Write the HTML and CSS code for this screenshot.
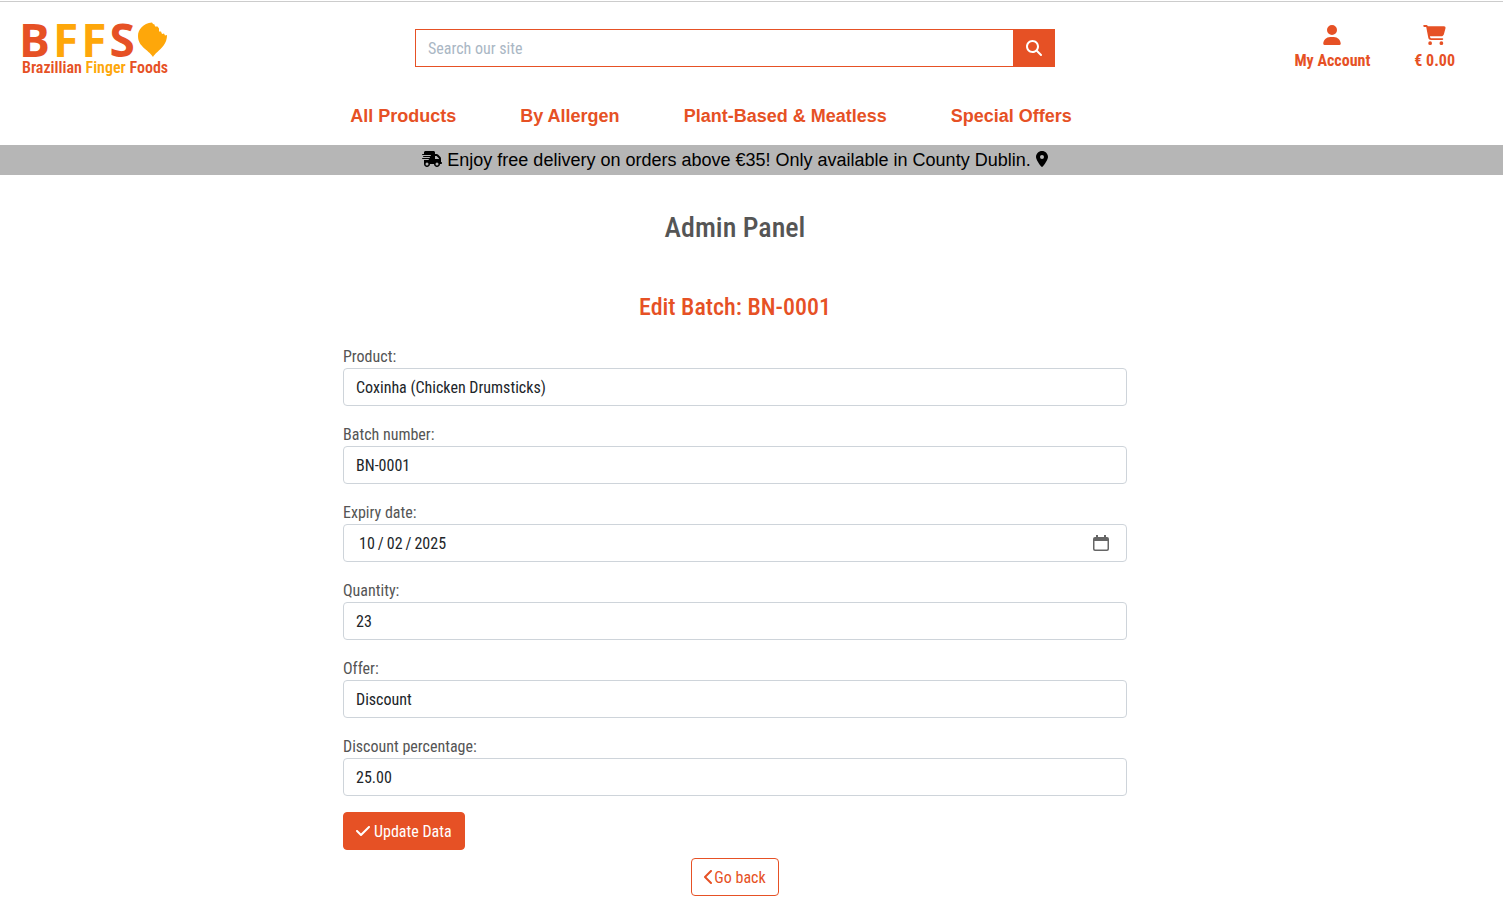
FILE: index.html
```html
<!DOCTYPE html>
<html lang="en">
<head>
<meta charset="utf-8">
<meta name="viewport" content="width=device-width, initial-scale=1">
<title>Admin Panel - Brazillian Finger Foods</title>
<link rel="stylesheet" href="styles.css">
</head>
<body>
<header class="site-header">
  <div class="header-top">
    <a href="#" class="logo" aria-label="Brazillian Finger Foods home">
      <span class="logo-letters">
        <span>B</span><span class="gold">F</span><span class="gold">F</span><span>S</span>
        <svg class="logo-mark" viewBox="0 0 29 35" aria-hidden="true"><path d="M14 0.500 C5 1.500 0 7.500 0 14 C0 25 10 27 15 35 C19 28.500 29 25 29 13 L27 13.500 L26 11.500 L24 12 L23 9.500 L21 9.500 L21 6.500 L19.500 4.500 L17 4.500 L16.500 2.500 L15 2 Z" fill="#fea70a"/></svg>
      </span>
      <span class="logo-tagline">Brazillian <span class="gold">Finger</span> Foods</span>
    </a>
    <form class="search" role="search">
      <input type="search" class="search-input" placeholder="Search our site" aria-label="Search our site">
      <button type="button" class="search-button" aria-label="Search">
        <svg class="icon-16" viewBox="0 0 512 512" aria-hidden="true"><path d="M416 208c0 45.900-14.900 88.300-40 122.700L502.600 457.400c12.500 12.500 12.500 32.800 0 45.300s-32.800 12.500-45.300 0L330.700 376c-34.400 25.200-76.800 40-122.700 40C93.100 416 0 322.900 0 208S93.100 0 208 0S416 93.100 416 208zM208 352a144 144 0 1 0 0-288 144 144 0 1 0 0 288z"/></svg>
      </button>
    </form>
    <div class="account-links">
      <a href="#" class="account-link">
        <svg class="icon-user" viewBox="0 0 448 512" aria-hidden="true"><path d="M224 256A128 128 0 1 0 224 0a128 128 0 1 0 0 256zm-45.700 48C79.800 304 0 383.800 0 482.300C0 498.700 13.300 512 29.700 512H418.300c16.400 0 29.700-13.300 29.700-29.700C448 383.800 368.200 304 269.700 304H178.300z"/></svg>
        <span>My Account</span>
      </a>
      <a href="#" class="account-link">
        <svg class="icon-cart" viewBox="0 0 576 512" aria-hidden="true"><path d="M0 24C0 10.700 10.700 0 24 0H69.500c22 0 41.500 12.800 50.600 32h411c26.300 0 45.500 25 38.600 50.400l-41 152.300c-8.500 31.400-37 53.300-69.500 53.300H170.700l5.400 28.500c2.200 11.300 12.100 19.500 23.600 19.500H488c13.300 0 24 10.700 24 24s-10.700 24-24 24H199.700c-34.600 0-64.300-24.600-70.700-58.500L77.400 54.500c-.7-3.800-4-6.500-7.900-6.500H24C10.700 48 0 37.300 0 24zM128 464a48 48 0 1 1 96 0 48 48 0 1 1 -96 0zm336-48a48 48 0 1 1 0 96 48 48 0 1 1 0-96z"/></svg>
        <span>€ 0.00</span>
      </a>
    </div>
  </div>
  <nav class="main-nav" aria-label="Main">
    <a href="#">All Products</a>
    <a href="#">By Allergen</a>
    <a href="#">Plant-Based &amp; Meatless</a>
    <a href="#">Special Offers</a>
  </nav>
</header>
<div class="banner">
  <svg class="icon-truck" viewBox="0 0 640 512" aria-hidden="true"><path d="M112 0C85.500 0 64 21.500 64 48V96H16c-8.800 0-16 7.200-16 16s7.200 16 16 16H64 272c8.800 0 16 7.200 16 16s-7.200 16-16 16H64 48c-8.800 0-16 7.200-16 16s7.200 16 16 16H64 240c8.800 0 16 7.200 16 16s-7.200 16-16 16H64 16c-8.800 0-16 7.200-16 16s7.200 16 16 16H64 208c8.800 0 16 7.200 16 16s-7.200 16-16 16H64V416c0 53 43 96 96 96s96-43 96-96H384c0 53 43 96 96 96s96-43 96-96h32c17.700 0 32-14.300 32-32s-14.300-32-32-32V288 256 237.300c0-17-6.700-33.300-18.700-45.300L512 114.700c-12-12-28.300-18.700-45.300-18.700H416V48c0-26.500-21.500-48-48-48H112zM544 237.300V256H416V160h50.700L544 237.300zM160 368a48 48 0 1 1 0 96 48 48 0 1 1 0-96zm272 48a48 48 0 1 1 96 0 48 48 0 1 1 -96 0z"/></svg>
  <span>Enjoy free delivery on orders above €35! Only available in County Dublin.</span>
  <svg class="icon-pin" viewBox="0 0 384 512" aria-hidden="true"><path d="M215.700 499.200C267 435 384 279.400 384 192C384 86 298 0 192 0S0 86 0 192c0 87.400 117 243 168.300 307.200c12.300 15.300 35.100 15.300 47.400 0zM192 128a64 64 0 1 1 0 128 64 64 0 1 1 0-128z"/></svg>
</div>
<main class="content">
  <h1 class="page-title">Admin Panel</h1>
  <h2 class="section-title">Edit Batch: BN-0001</h2>
  <form class="batch-form">
    <div class="field">
      <label for="product">Product:</label>
      <select id="product" class="control"><option>Coxinha (Chicken Drumsticks)</option></select>
    </div>
    <div class="field">
      <label for="batch">Batch number:</label>
      <input id="batch" class="control" type="text" value="BN-0001">
    </div>
    <div class="field">
      <label for="expiry">Expiry date:</label>
      <input id="expiry" class="control" type="date" value="2025-10-02">
    </div>
    <div class="field">
      <label for="quantity">Quantity:</label>
      <input id="quantity" class="control" type="number" value="23">
    </div>
    <div class="field">
      <label for="offer">Offer:</label>
      <select id="offer" class="control"><option>Discount</option></select>
    </div>
    <div class="field">
      <label for="discount">Discount percentage:</label>
      <input id="discount" class="control" type="text" value="25.00">
    </div>
    <button type="button" class="button button-solid">
      <svg class="icon-check" viewBox="0 0 448 512" aria-hidden="true"><path d="M438.600 105.400c12.500 12.500 12.500 32.800 0 45.300l-256 256c-12.500 12.500-32.800 12.500-45.300 0l-128-128c-12.500-12.500-12.500-32.800 0-45.300s32.800-12.500 45.300 0L160 338.700 393.400 105.400c12.500-12.500 32.800-12.500 45.300 0z"/></svg>
      <span>Update Data</span>
    </button>
  </form>
  <a href="#" class="button button-outline">
    <svg class="icon-chevron" viewBox="0 0 320 512" aria-hidden="true"><path d="M9.400 233.400c-12.500 12.500-12.500 32.800 0 45.300l192 192c12.500 12.500 32.800 12.500 45.300 0s12.500-32.800 0-45.300L77.300 256 246.600 86.600c12.500-12.500 12.500-32.800 0-45.300s-32.800-12.500-45.300 0l-192 192z"/></svg>
    <span>Go back</span>
  </a>
</main>
</body>
</html>
```
FILE: styles.css
```css
:root {
  --orange: #e65125;
  --gold: #fea70a;
  --condensed: "Roboto Condensed", Roboto, sans-serif;
  --gutter: 33px;
}

* { box-sizing: border-box; }

body {
  margin: 0;
  background: #fff;
  color: #555;
  font: 16px/24px var(--condensed);
}

a { color: var(--orange); text-decoration: none; }
svg { display: block; fill: currentColor; }
.gold { color: var(--gold); }

.site-header {
  margin-top: 1px;
  border-top: 1px solid #ccc;
  padding-right: var(--gutter);
}

.header-top {
  display: grid;
  grid-template-columns: 1fr 640px 1fr;
  height: 92px;
}

.logo {
  justify-self: start;
  padding: 20px 0 0 19px;
  font-weight: 600;
}

.logo-letters {
  display: flex;
  gap: 3px;
  font: 750 46px/34px "Open Sans", sans-serif;
}

.logo-mark { width: 29px; height: 35px; }

.logo-tagline {
  display: block;
  padding-left: 3px;
  font-size: 16px;
  line-height: 22px;
}

.search {
  display: flex;
  height: 38px;
  margin-top: 27px;
}

.search-input {
  flex: 1;
  min-width: 0;
  border: 1px solid var(--orange);
  border-right: 0;
  border-radius: 0;
  padding: 7px 12px 5px;
  font: inherit;
  appearance: none;
}

.search-input::placeholder { color: #aab7c4; }

.search-button {
  border: 0;
  padding: 0 13px;
  background: var(--orange);
  color: #fff;
}

.icon-16 { width: 16px; height: 16px; }

.account-links {
  display: flex;
  justify-content: flex-end;
  gap: 44px;
  padding: 23px 15px 0 0;
}

.account-link {
  display: flex;
  flex-direction: column;
  align-items: center;
  gap: 4px;
  font-weight: 700;
}

.icon-user { width: 18px; height: 20px; }
.icon-cart { width: 23px; height: 20px; }

.main-nav {
  display: flex;
  justify-content: center;
  gap: 64px;
  height: 51px;
  padding: 8px 48px 0 0;
  font: 700 18px/28px "Liberation Sans", Arial, sans-serif;
}

.banner {
  display: flex;
  align-items: center;
  justify-content: center;
  gap: 5px;
  height: 30px;
  padding-right: var(--gutter);
  background: #b6b6b6;
  color: #000;
  font: 18px/28px "Liberation Sans", Arial, sans-serif;
}

.icon-truck,
.icon-pin { height: 16px; margin-bottom: 2px; }
.icon-truck { width: 20px; }
.icon-pin { width: 12px; }

.content {
  display: flex;
  flex-direction: column;
  align-items: center;
  padding: 36px var(--gutter) 20px 0;
}

.page-title {
  margin: 0;
  font-size: 28px;
  font-weight: 500;
  line-height: 34px;
}

.section-title {
  margin: 48px 0 23px;
  color: var(--orange);
  font-size: 24px;
  font-weight: 500;
  line-height: 28px;
}

.batch-form {
  width: 784px;
  max-width: 100%;
  margin-bottom: 8px;
}

.field { margin-bottom: 16px; }

.field label {
  display: block;
  height: 24px;
  line-height: 26px;
}

.control {
  display: block;
  width: 100%;
  height: 38px;
  border: 1px solid #ced4da;
  border-radius: 4px;
  padding: 6px 12px;
  background: #fff;
  color: #212529;
  font: inherit;
  appearance: none;
}

select.control { padding: 7px 12px 5px; }

.control::-webkit-datetime-edit { padding: 2px 0 0 2px; }
.control::-webkit-datetime-edit-text { padding: 0 2px; }

.control::-webkit-calendar-picker-indicator {
  width: 16px;
  height: 16px;
  margin-right: 5px;
  padding: 0;
  background: url("data:image/svg+xml,%3Csvg xmlns='http://www.w3.org/2000/svg' viewBox='0 0 16 16'%3E%3Cpath fill='%23666' d='M3 0h2v2h6V0h2v2h1a2 2 0 0 1 2 2v10a2 2 0 0 1-2 2H2a2 2 0 0 1-2-2V4a2 2 0 0 1 2-2h1zM1.500 6v8l.5.5h12l.5-.5V6z'/%3E%3C/svg%3E") center / 16px 16px no-repeat;
}

.button {
  display: inline-flex;
  align-items: center;
  height: 38px;
  border: 1px solid var(--orange);
  border-radius: 4px;
  padding: 6px 12px;
  font: inherit;
}

.button span { padding-top: 2px; }

.button-solid {
  gap: 4px;
  background: var(--orange);
  color: #fff;
}

.button-outline { color: var(--orange); }
.icon-check { width: 14px; height: 16px; }
.icon-chevron { width: 10px; height: 16px; }
```
